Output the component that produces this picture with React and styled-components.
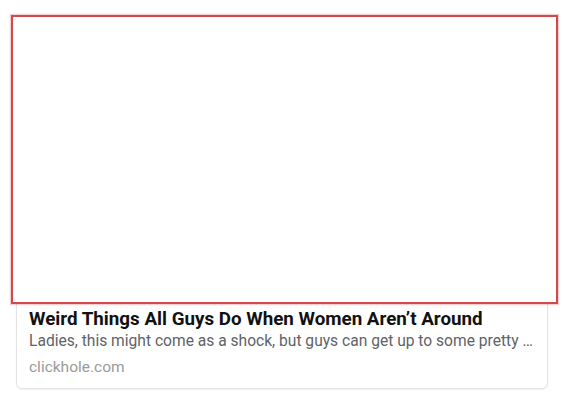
import React from "react";
import styled, { createGlobalStyle } from "styled-components";

const Global = createGlobalStyle`
  html, body { margin: 0; padding: 0; background: #ffffff; }
  body { font-family: Roboto, "Noto Sans", sans-serif; }
`;

const Page = styled.div`
  width: 564px;
  height: 400px;
  padding: 16px 16px 0 16px;
  box-sizing: border-box;
`;

const Card = styled.article`
  width: 532px;
  box-sizing: border-box;
  border: 1px solid #e3e3e3;
  border-radius: 6px;
  box-shadow: 0 1px 2px rgba(0, 0, 0, 0.06);
  background: #fff;
  padding-bottom: 11px;
`;

const Media = styled.div`
  box-sizing: border-box;
  height: 289px;
  margin: -2px -11px 0 -6px;
  border: 2px solid #d0494b;
  box-shadow: 0 0 1px 1px rgba(208, 73, 75, 0.25);
  background: #fff;
`;

const Body = styled.div`
  display: flex;
  flex-direction: column;
  padding: 4px 12px 0 12px;
`;

const Title = styled.h3`
  margin: 0;
  font-size: 18.8px;
  line-height: 23px;
  font-weight: 700;
  color: #111;
  white-space: nowrap;
  overflow: hidden;
  text-overflow: ellipsis;
`;

const Desc = styled.p`
  margin: 0;
  font-size: 15.6px;
  line-height: 20px;
  color: #606368;
  white-space: nowrap;
  overflow: hidden;
`;

const Domain = styled.span`
  margin-top: 6px;
  font-size: 15.5px;
  line-height: 20px;
  color: #9a9a9a;
`;

export default function App() {
  return (
    <Page>
      <Global />
      <Card>
        <Media />
        <Body>
          <Title>Weird Things All Guys Do When Women Aren’t Around</Title>
          <Desc>Ladies, this might come as a shock, but guys can get up to some pretty …</Desc>
          <Domain>clickhole.com</Domain>
        </Body>
      </Card>
    </Page>
  );
}
